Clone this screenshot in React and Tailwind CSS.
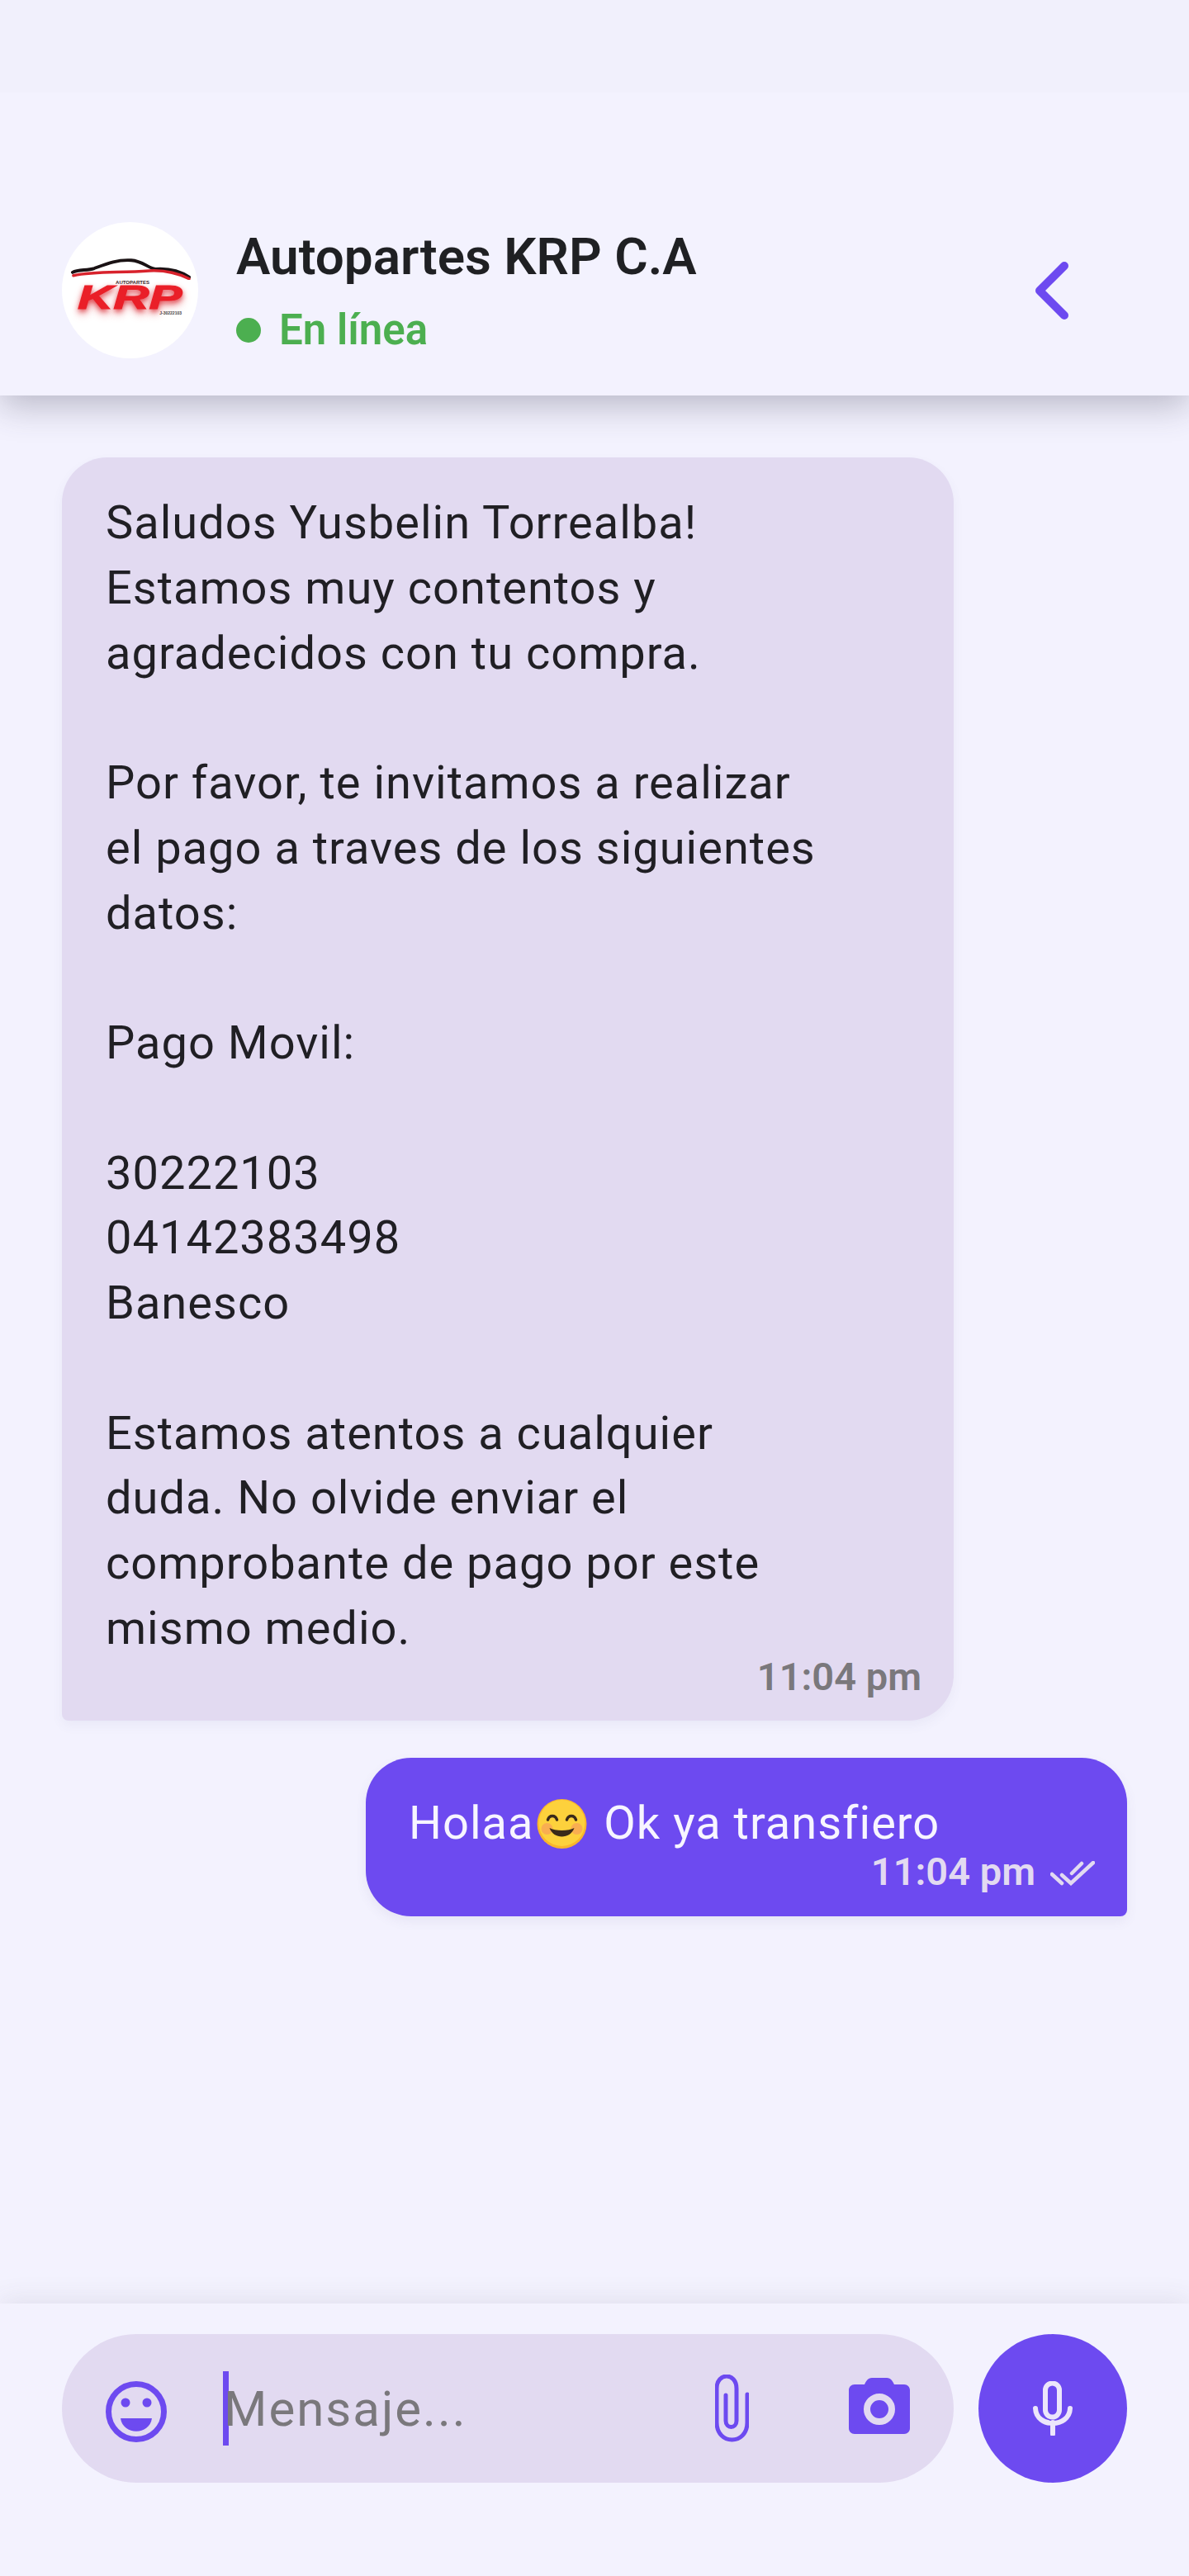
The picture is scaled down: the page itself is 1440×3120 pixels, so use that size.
import React from 'react';

const roboto = { fontFamily: 'Roboto, sans-serif' };
const arial = { fontFamily: '"Liberation Sans", sans-serif' };

const firstMessage = `Saludos Yusbelin Torrealba!
Estamos muy contentos y
agradecidos con tu compra.

Por favor, te invitamos a realizar
el pago a traves de los siguientes
datos:

Pago Movil:

30222103
04142383498
Banesco

Estamos atentos a cualquier
duda. No olvide enviar el
comprobante de pago por este
mismo medio.`;

function Logo() {
  return (
    <div className="w-[165px] h-[165px] rounded-full bg-white shrink-0 flex flex-col items-center justify-center overflow-hidden">
      <svg viewBox="0 0 150 26" className="w-[146px] h-[26px] -mt-[8px]" fill="none">
        <path d="M3 17C10 13 20 15 30 12C46 6 58 1 76 2C90 3 96 11 106 13C120 12 136 15 148 23" stroke="#1a1214" strokeWidth="4" strokeLinecap="round" />
        <path d="M4 21C32 15 62 18 98 15C116 14 134 18 148 25" stroke="#d8222c" strokeWidth="3.5" strokeLinecap="round" />
      </svg>
      <span className="text-[6px] leading-[7px] font-bold text-[#3a2226] ml-[6px]" style={arial}>AUTOPARTES</span>
      <span className="text-[40px] leading-[29px] font-bold italic text-[#ea1f28] scale-x-[1.5] [-webkit-text-stroke:1px_#ea1f28] [text-shadow:0_3px_5px_rgba(215,20,30,0.8),0_6px_9px_rgba(215,20,30,0.4)]" style={arial}>KRP</span>
      <span className="self-end mr-[20px] mt-[1px] text-[5px] leading-[6px] font-bold text-[#444]" style={arial}>J-30222103</span>
    </div>
  );
}

function Header() {
  return (
    <header className="h-[479px] shrink-0 bg-[#f3f2fe] flex items-end relative z-10 shadow-[0_12px_40px_rgba(60,60,80,0.32)]">
      <div className="flex items-center w-full pl-[75px] pr-[146px] pb-[45px]">
        <Logo />
        <div className="ml-[46px] flex-1">
          <div className="text-[62px] leading-[74px] font-semibold text-[#1f2023]">Autopartes KRP C.A</div>
          <div className="flex items-center mt-[22px]">
            <span className="w-[30px] h-[30px] rounded-full bg-[#4caf50]" />
            <span className="ml-[22px] text-[51px] leading-[60px] font-semibold text-[#4caf50]">En línea</span>
          </div>
        </div>
        <svg viewBox="0 0 40 70" className="w-[40px] h-[70px]" fill="none">
          <path d="M35 5L5 35L35 65" stroke="#6d4af0" strokeWidth="10" strokeLinecap="round" strokeLinejoin="round" />
        </svg>
      </div>
    </header>
  );
}

function SmileEmoji() {
  return (
    <svg viewBox="0 0 60 60" className="inline-block w-[63px] h-[60px] ml-[3px] mr-[4px] align-[-12px]">
      <circle cx="30" cy="30" r="30" fill="#f9b52c" />
      <circle cx="30" cy="29" r="28" fill="#fdd13c" />
      <circle cx="12" cy="36" r="7" fill="#f6a05a" opacity="0.7" />
      <circle cx="48" cy="36" r="7" fill="#f6a05a" opacity="0.7" />
      <path d="M13 25C15 19 22 19 24 25M36 25C38 19 45 19 47 25" stroke="#3a2a1a" strokeWidth="3.5" fill="none" strokeLinecap="round" />
      <path d="M15 35C20 49 40 49 45 35C38 39 22 39 15 35Z" fill="#3a2a1a" />
    </svg>
  );
}

function DoubleCheck() {
  return (
    <svg viewBox="0 0 54 30" className="w-[54px] h-[30px] ml-[18px] mt-[4px]" fill="none" stroke="#e2daf1" strokeWidth="4.5" strokeLinecap="round">
      <path d="M2 16L14 27" />
      <path d="M14 17L25 27L52 2" />
      <path d="M26 15L38 3" />
    </svg>
  );
}

function Messages() {
  return (
    <main className="flex-1 px-[75px] pt-[75px] flex flex-col">
      <div className="w-[1080px] bg-[#e2daf1] rounded-[55px] rounded-bl-[8px] pl-[53px] pr-[39px] pt-[40px] pb-[25px] shadow-[0_6px_14px_rgba(90,80,140,0.06)]">
        <p className="text-[56px] leading-[78.75px] text-[#201f24] tracking-[1px] whitespace-pre-wrap">{firstMessage}</p>
        <div className="text-right text-[47px] leading-[56px] -mt-[9px] font-semibold text-[#7a787c]">11:04 pm</div>
      </div>
      <div className="self-end mt-[45px] w-[922px] h-[192px] bg-[#6d4af0] rounded-[55px] rounded-br-[8px] pl-[52px] pr-[39px] pt-[40px] shadow-[0_6px_14px_rgba(90,80,140,0.08)]">
        <p className="text-[56px] leading-[78px] text-[#f7f5ff] tracking-[1px]">Holaa<SmileEmoji /> Ok ya transfiero</p>
        <div className="flex items-center justify-end -mt-[8px]">
          <span className="text-[47px] leading-[56px] font-semibold text-[#e2daf1]">11:04 pm</span>
          <DoubleCheck />
        </div>
      </div>
    </main>
  );
}

function Composer() {
  return (
    <footer className="h-[330px] shrink-0 bg-[#f3f2fe] px-[75px] pt-[37px] flex gap-[30px] items-start shadow-[0_-4px_30px_rgba(70,70,90,0.1)]">
      <div className="w-[1080px] h-[180px] rounded-full bg-[#e2daf1] flex items-center pl-[53px]">
        <svg viewBox="0 0 74 74" className="w-[74px] h-[74px] mt-[8px]">
          <circle cx="37" cy="37" r="33.5" fill="none" stroke="#6d4af0" strokeWidth="7" />
          <circle cx="24" cy="26" r="5.5" fill="#6d4af0" />
          <circle cx="50" cy="26" r="5.5" fill="#6d4af0" />
          <path d="M18 45H56C53 66 21 66 18 45Z" fill="#6d4af0" />
        </svg>
        <span className="w-[7px] h-[90px] bg-[#6d4af0] ml-[68px] shrink-0" />
        <span className="flex-1 -ml-[6px] text-[60px] leading-[70px] text-[#7a787c] tracking-[2px] mt-[2px]">Mensaje...</span>
        <svg viewBox="0 0 41 82" className="w-[41px] h-[82px] mr-[121px]" fill="none" stroke="#6d4af0" strokeWidth="5" strokeLinecap="round">
          <path d="M13 25V56C13 66 26 66 26 56V17C26 -3 2 -3 2 17V58C2 86 39 86 39 58V24" />
        </svg>
        <svg viewBox="0 0 74 68" className="w-[74px] h-[68px] mr-[53px] mb-[6px]">
          <path d="M7 8H19C21 4 23 0 28 0H46C51 0 53 4 55 8H67C71 8 74 11 74 15V61C74 65 71 68 67 68H7C3 68 0 65 0 61V15C0 11 3 8 7 8Z" fill="#6d4af0" />
          <circle cx="37" cy="38" r="15" fill="#6d4af0" stroke="#e2daf1" strokeWidth="8" />
        </svg>
      </div>
      <button className="w-[180px] h-[180px] rounded-full bg-[#6d4af0] flex items-center justify-center">
        <svg viewBox="0 0 48 66" className="w-[48px] h-[66px]" fill="none">
          <rect x="15" y="2.5" width="17" height="41" rx="8.5" stroke="#ece6fb" strokeWidth="6" />
          <path d="M3 33C4 57 44 57 45 33" stroke="#ece6fb" strokeWidth="6" strokeLinecap="round" />
          <path d="M24 50V64" stroke="#ece6fb" strokeWidth="6" strokeLinecap="round" />
        </svg>
      </button>
    </footer>
  );
}

export default function App() {
  return (
    <div className="w-[1440px] h-[3120px] flex flex-col bg-[#f3f2fe] overflow-hidden relative" style={roboto}>
      <div className="absolute top-0 left-0 right-0 h-[112px] bg-[#f1f0fc] z-20" />
      <Header />
      <Messages />
      <Composer />
    </div>
  );
}
